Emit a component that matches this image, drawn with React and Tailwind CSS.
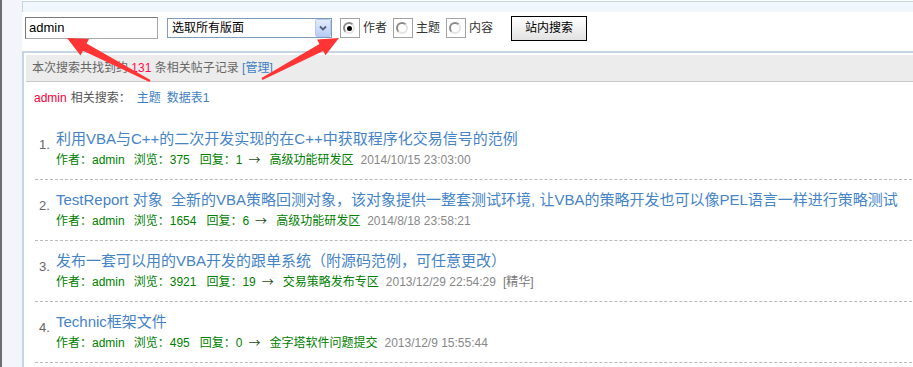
import React from 'react';

const posts = [
  {
    title: '利用VBA与C++的二次开发实现的在C++中获取程序化交易信号的范例',
    views: 375,
    replies: 1,
    board: '高级功能研发区',
    date: '2014/10/15 23:03:00',
  },
  {
    title: 'TestReport 对象\u00a0 全新的VBA策略回测对象，该对象提供一整套测试环境, 让VBA的策略开发也可以像PEL语言一样进行策略测试',
    views: 1654,
    replies: 6,
    board: '高级功能研发区',
    date: '2014/8/18 23:58:21',
  },
  {
    title: '发布一套可以用的VBA开发的跟单系统（附源码范例，可任意更改）',
    views: 3921,
    replies: 19,
    board: '交易策略发布专区',
    date: '2013/12/29 22:54:29',
    digest: true,
  },
  {
    title: 'Technic框架文件',
    views: 495,
    replies: 0,
    board: '金字塔软件问题提交',
    date: '2013/12/9 15:55:44',
  },
];

function Radio({ checked, label }) {
  return (
    <>
      <span className="flex h-[20px] w-[20px] items-center border border-[#a3a3a3] bg-white pl-[2px]">
        <span className="flex h-[12px] w-[12px] items-center justify-center rounded-full border-2 border-t-[#8a8a8a] border-l-[#8a8a8a] border-r-[#e4e4e4] border-b-[#e4e4e4] bg-white">
          {checked && <span className="h-[5px] w-[5px] rounded-full bg-black" />}
        </span>
      </span>
      <span className="ml-[3px] text-[12px] text-[#333]">{label}</span>
    </>
  );
}

function Arrows() {
  return (
    <svg className="pointer-events-none absolute left-0 top-0" width="913" height="367" viewBox="0 0 913 367">
      <polygon
        fill="#ff3535"
        points="67,38 89,39 86.6,43.6 150.5,80.1 149.5,81.9 83,50.8 80.5,55.5"
      />
      <polygon
        fill="#ff3535"
        points="339,38 325.5,55.3 323.2,50.9 262.5,79.9 261.5,78.1 319.4,43.9 317.1,39.5"
      />
    </svg>
  );
}

export default function App() {
  return (
    <div className="relative h-[367px] w-[913px] overflow-hidden bg-white font-['Liberation_Sans','Noto_Sans_CJK_SC',sans-serif] text-[12px]">
      <div className="flex h-full">
        <div className="w-[2px] shrink-0 bg-[#6e6e6e]" />
        <div className="w-[20px] shrink-0 bg-[#f2f6fa]" />
        <div className="w-[960px] shrink-0">
          {/* bottom edge of the box above */}
          <div className="mt-[1px] h-[11px] border-l border-t border-[#c6d5e2] bg-[#f2f7fb]" />

          {/* search form */}
          <div className="h-[39px] pt-[4px]">
            <div className="flex h-[24px] items-center pl-[3px]">
              <div className="flex h-[22px] w-[133px] items-center border border-t-[#7b7b7b] border-l-[#7b7b7b] border-r-[#a8a8a8] border-b-[#a8a8a8] pl-[3px] text-[13px] text-black">
                admin
              </div>
              <div className="ml-[9px] flex h-[20px] w-[165px] items-center justify-between border border-[#7f9db9] pl-[4px] text-[12px] text-black">
                <span>选取所有版面</span>
                <span className="flex h-[18px] w-[16px] items-center justify-center rounded-[2px] border border-[#b5c8f0] bg-gradient-to-b from-[#e3ebfc] to-[#b8ccf4]">
                  <svg width="8" height="6" viewBox="0 0 8 6">
                    <polyline points="1,1.5 4,4.5 7,1.5" fill="none" stroke="#4d6185" strokeWidth="1.8" />
                  </svg>
                </span>
              </div>
              <span className="ml-[8px] flex items-center">
                <Radio checked label="作者" />
              </span>
              <span className="ml-[6px] flex items-center">
                <Radio label="主题" />
              </span>
              <span className="ml-[6px] flex items-center">
                <Radio label="内容" />
              </span>
              <button className="ml-[18px] flex h-[25px] w-[76px] items-center justify-center border border-black bg-gradient-to-b from-white to-[#e2e2e2] text-[12px] text-black">
                站内搜索
              </button>
            </div>
          </div>

          {/* results */}
          <div className="h-[400px] border-2 border-r-0 border-[#c5d5e3] pl-[2px] pt-[2px]">
            <div className="h-[27px] border-b border-[#c9c9c9] bg-[#ececec] pl-[6px] leading-[26px] text-[#666]">
              本次搜索共找到约 <span className="text-[#ff0a50]">131</span> 条相关帖子记录{' '}
              <span className="text-[#3f7fc3]">[管理]</span>
            </div>

            <div className="mt-[8px] pl-[8px] leading-[16px]">
              <span className="text-[#f2003c]">admin</span>
              <span className="ml-[4px] text-[#555]">相关搜索：</span>
              <span className="ml-[6px] text-[#3f7fc3]">主题</span>
              <span className="ml-[6px] text-[#3f7fc3]">数据表1</span>
            </div>

            <ol className="ml-[9px] mt-[13px]">
              {posts.map((p, i) => (
                <li key={i} className="flex border-b border-dashed border-[#b9b9b9] pb-[11px] pt-[10px]">
                  <span className="w-[21px] shrink-0 pl-[4px] pt-[6px] text-[13px] leading-[20px] text-[#666]">
                    {i + 1}.
                  </span>
                  <div>
                    <div className="whitespace-nowrap text-[15px] leading-[20px] text-[#4584c6]">{p.title}</div>
                    <div className="mt-[3px] flex whitespace-nowrap leading-[16px] text-[#008000]">
                      <span>作者：admin</span>
                      <span className="ml-[9px]">浏览：{p.views}</span>
                      <span className="ml-[10px]">回复：{p.replies}</span>
                      <span className="ml-[6px] font-['Noto_Sans_CJK_SC',sans-serif] text-[#1a4d1a]">→</span>
                      <span className="ml-[9px]">{p.board}</span>
                      <span className="ml-[7px] text-[#888]">{p.date}</span>
                      {p.digest && <span className="ml-[7px] text-[#777]">[精华]</span>}
                    </div>
                  </div>
                </li>
              ))}
            </ol>
          </div>
        </div>
      </div>
      <Arrows />
    </div>
  );
}
